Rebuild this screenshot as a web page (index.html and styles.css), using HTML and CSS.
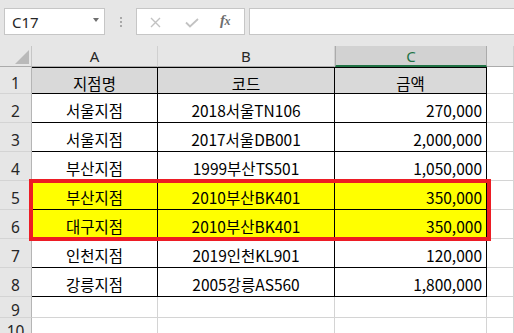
FILE: index.html
```html
<!DOCTYPE html>
<html lang="ko">
<head>
<meta charset="utf-8">
<link rel="stylesheet" href="styles.css">
</head>
<body>
<div class="toolbar">
  <div class="namebox"><span class="ref">C17</span><span class="dd"></span></div>
  <div class="sep"><i></i><i></i><i></i></div>
  <div class="fxbox">
    <svg class="ic-x" width="11" height="11" viewBox="0 0 11 11"><path d="M1 1L10 10M10 1L1 10" stroke="#c2c2c2" stroke-width="1.4" fill="none"/></svg>
    <svg class="ic-ok" width="14" height="10" viewBox="0 0 14 10"><path d="M1 4.5L5 8.5L13 1" stroke="#c2c2c2" stroke-width="1.8" fill="none"/></svg>
    <span class="fx">f<span class="fxx">x</span></span>
  </div>
  <div class="formula"></div>
</div>
<div class="sheet">
  <div class="corner"><span class="tri"></span></div>
  <div class="ch">A</div>
  <div class="ch">B</div>
  <div class="ch sel">C</div>
  <div class="ch"></div>

  <div class="rh">1</div>
  <div class="c t hd top ctr">지점명</div>
  <div class="c t hd top ctr">코드</div>
  <div class="c t hd top ctr">금액</div>
  <div class="c"></div>

  <div class="rh">2</div>
  <div class="c t ctr">서울지점</div>
  <div class="c t ctr">2018서울TN106</div>
  <div class="c t num">270,000</div>
  <div class="c"></div>

  <div class="rh">3</div>
  <div class="c t ctr">서울지점</div>
  <div class="c t ctr">2017서울DB001</div>
  <div class="c t num">2,000,000</div>
  <div class="c"></div>

  <div class="rh">4</div>
  <div class="c t ctr">부산지점</div>
  <div class="c t ctr">1999부산TS501</div>
  <div class="c t num">1,050,000</div>
  <div class="c"></div>

  <div class="rh">5</div>
  <div class="c t y ctr">부산지점</div>
  <div class="c t y ctr">2010부산BK401</div>
  <div class="c t y num">350,000</div>
  <div class="c"></div>

  <div class="rh">6</div>
  <div class="c t y ctr">대구지점</div>
  <div class="c t y ctr">2010부산BK401</div>
  <div class="c t y num">350,000</div>
  <div class="c"></div>

  <div class="rh">7</div>
  <div class="c t ctr">인천지점</div>
  <div class="c t ctr">2019인천KL901</div>
  <div class="c t num">120,000</div>
  <div class="c"></div>

  <div class="rh">8</div>
  <div class="c t ctr">강릉지점</div>
  <div class="c t ctr">2005강릉AS560</div>
  <div class="c t num">1,800,000</div>
  <div class="c"></div>

  <div class="rh">9</div>
  <div class="c"></div>
  <div class="c"></div>
  <div class="c"></div>
  <div class="c"></div>

  <div class="rh">10</div>
  <div class="c"></div>
  <div class="c"></div>
  <div class="c"></div>
  <div class="c"></div>
</div>
<div class="mark"></div>
</body>
</html>
```

FILE: styles.css
```css
html, body {
  margin: 0;
  padding: 0;
  width: 514px;
  height: 333px;
  overflow: hidden;
  background: #ffffff;
  font-family: "Noto Sans CJK KR", "Noto Sans", sans-serif;
  position: relative;
}

.toolbar {
  height: 46px;
  box-sizing: border-box;
  background: #e6e6e6;
  display: flex;
  align-items: flex-start;
  padding: 8px 0 0 4px;
}

.namebox {
  width: 101px;
  height: 27px;
  box-sizing: border-box;
  background: #ffffff;
  border: 1px solid #c6c6c6;
  display: flex;
  align-items: center;
  justify-content: space-between;
  padding: 0 5px 0 7px;
}

.ref {
  font-family: "Noto Sans", sans-serif;
  font-size: 15px;
  color: #262626;
}

.dd {
  width: 0;
  height: 0;
  border-left: 3.5px solid transparent;
  border-right: 3.5px solid transparent;
  border-top: 4px solid #6f6f6f;
  margin-bottom: 3px;
}

.sep {
  width: 31px;
  height: 27px;
  display: flex;
  flex-direction: column;
  align-items: center;
  justify-content: center;
  gap: 2px;
  padding-top: 1px;
  box-sizing: border-box;
}

.sep i {
  display: block;
  width: 2px;
  height: 2px;
  background: #a8a8a8;
}

.fxbox {
  width: 109px;
  height: 27px;
  box-sizing: border-box;
  background: #ffffff;
  border: 1px solid #c6c6c6;
  display: flex;
  align-items: center;
  padding-left: 13px;
}

.ic-x { margin-top: 1px; }
.ic-ok { margin-left: 24px; margin-top: 2px; }

.fx {
  margin-left: 21px;
  font-family: "Liberation Serif", serif;
  font-style: italic;
  font-weight: bold;
  font-size: 15px;
  color: #6e6e6e;
  letter-spacing: -0.5px;
  margin-top: -2px;
}

.fxx {
  font-size: 12px;
}

.formula {
  flex: 1;
  margin-left: 4px;
  height: 27px;
  box-sizing: border-box;
  background: #ffffff;
  border: 1px solid #c6c6c6;
  border-right: none;
}

.sheet {
  display: grid;
  grid-template-columns: 32px 126px 177px 152px 27px;
  grid-template-rows: 21px 27px repeat(7, 29px) 21px 21px;
  font-size: 15.5px;
}

.sheet > div {
  box-sizing: border-box;
  display: flex;
  align-items: center;
  min-width: 0;
  white-space: nowrap;
}

.corner {
  background: #e6e6e6;
  border-right: 1px solid #c6c6c6;
  border-bottom: 1px solid #ababab;
  position: relative;
}

.tri {
  position: absolute;
  left: 15px;
  top: 4px;
  width: 0;
  height: 0;
  border-left: 14px solid transparent;
  border-bottom: 14px solid #b9b9b9;
}

.ch {
  background: #e6e6e6;
  border-right: 1px solid #d0d0d0;
  border-bottom: 1px solid #ababab;
  justify-content: center;
  color: #262626;
  font-family: "Noto Sans", "Noto Sans CJK KR", sans-serif;
  font-size: 15px;
}

.ch.sel {
  background: #d2d2d2;
  color: #217346;
  border-right: 1px solid #ababab;
  border-left: 1px solid #ababab;
  border-bottom: 2px solid #217346;
}

.rh {
  background: #e6e6e6;
  border-right: 1px solid #b5b5b5;
  border-bottom: 1px solid #d4d4d4;
  justify-content: center;
  color: #262626;
  padding-top: 5px;
  font-family: "Noto Sans", "Noto Sans CJK KR", sans-serif;
  font-size: 15.5px;
}

.c {
  border-right: 1px solid #d4d4d4;
  border-bottom: 1px solid #d4d4d4;
  color: #000000;
  padding-top: 4px;
}

.c.t {
  border-right-color: #000000;
  border-bottom-color: #000000;
}

.c.top {
  border-top: 1px solid #000000;
}

.hd { background: #d9d9d9; }
.y { background: #ffff00; }

.ctr { justify-content: center; }

.num {
  justify-content: flex-end;
  padding-right: 4px;
}

.mark {
  position: absolute;
  left: 29px;
  top: 179px;
  width: 462px;
  height: 62px;
  box-sizing: border-box;
  border: 4px solid #ed1c24;
}
```
